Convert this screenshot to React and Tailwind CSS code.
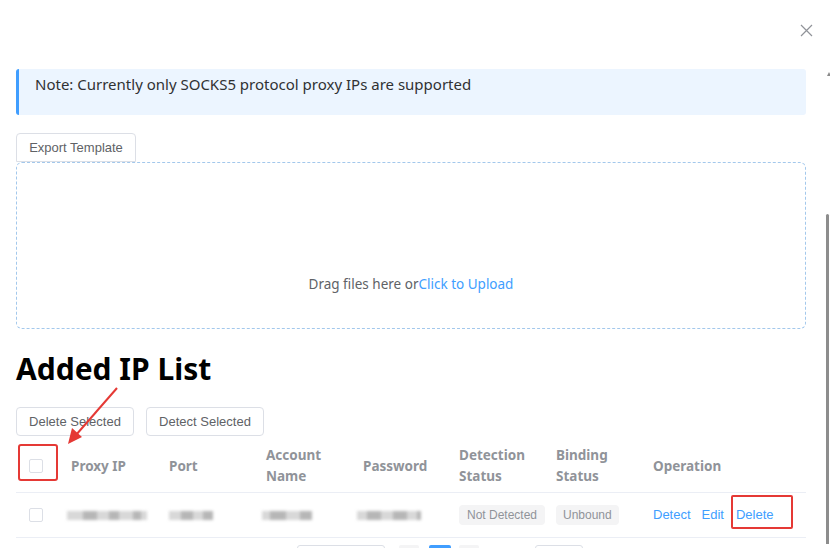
import React from 'react';

// Added IP dialog body
const cols = [
  { key: 'ip', label: 'Proxy IP', w: 'w-[98px]' },
  { key: 'port', label: 'Port', w: 'w-[97px]' },
  { key: 'account', label: 'Account Name', w: 'w-[97px]' },
  { key: 'password', label: 'Password', w: 'w-[96px]' },
  { key: 'detect', label: 'Detection Status', w: 'w-[97px]' },
  { key: 'bind', label: 'Binding Status', w: 'w-[97px]' },
  { key: 'op', label: 'Operation', w: 'flex-1' },
];

function Blur({ widths, className = '' }) {
  return (
    <div className={`flex items-center h-[12px] blur-[1.5px] ${className}`}>
      {widths.map((w, i) => (
        <div key={i} className="h-[9px] bg-[#a9a9a9]" style={{ width: w, opacity: i % 2 ? 0.85 : 0.45 }} />
      ))}
    </div>
  );
}

function Checkbox() {
  return <span className="block w-[14px] h-[14px] border border-[#dcdfe6] rounded-[2px] bg-white" />;
}

function Btn({ children, className = '' }) {
  return (
    <button className={`block h-[29px] whitespace-nowrap border border-[#dcdfe6] rounded-[4px] bg-white text-[13px] text-[#606266] ${className}`} style={{ fontFamily: '"Liberation Sans", Arial, sans-serif' }}>
      {children}
    </button>
  );
}

export default function App() {
  return (
    <div className="relative w-[830px] h-[548px] overflow-hidden bg-white" style={{ fontFamily: '"Noto Sans", "Open Sans", sans-serif' }}>
      <div className="pl-[16px] w-[806px]">
        {/* header */}
        <div className="h-[69px] flex justify-end items-start pt-[24px] -mr-[7px]">
          <svg width="13" height="13" viewBox="0 0 13 13" className="text-[#909399]">
            <path d="M1 1L12 12M12 1L1 12" stroke="currentColor" strokeWidth="1.2" />
          </svg>
        </div>

        {/* note */}
        <div className="h-[46px] bg-[#ecf5ff] border-l-[3px] border-[#409eff] rounded-[3px] pl-[16px] pt-[4px] text-[15px] text-[#303133]">
          Note: Currently only SOCKS5 protocol proxy IPs are supported
        </div>

        <Btn className="mt-[18px] w-[120px] rounded-b-none">Export Template</Btn>

        {/* upload */}
        <div className="h-[167px] border border-dashed border-[#a3c8ec] rounded-[6px] flex items-end justify-center pb-[34px] text-[13.5px]">
          <span className="text-[#606266]">Drag files here or</span>
          <span className="text-[#409eff]">Click to Upload</span>
        </div>

        <h2 className="mt-[22px] h-[36px] text-[30px] leading-[36px] font-bold text-black">Added IP List</h2>

        <div className="mt-[20px] flex gap-[12px]">
          <Btn className="w-[118px]">Delete Selected</Btn>
          <Btn className="w-[118px]">Detect Selected</Btn>
        </div>

        {/* table */}
        <div className="mt-[4px]">
          <div className="flex items-center h-[53px] border-b border-[#ebeef5] text-[13.5px] font-bold text-[#909399] leading-[21px]">
            <div className="relative w-[55px] h-full flex items-center pl-[13px]">
              <Checkbox />
              <div className="absolute left-[2px] top-[4px] w-[40px] h-[37px] border-2 border-[#e53935] rounded-[3px]" />
            </div>
            {cols.map((c) => (
              <div key={c.key} className={`${c.w} pr-[10px]`}>{c.label}</div>
            ))}
          </div>

          <div className="flex items-center h-[45px] border-b border-[#ebeef5] text-[13px]">
            <div className="w-[55px] pl-[13px]"><Checkbox /></div>
            <div className="w-[98px]"><Blur className="-ml-[4px]" widths={[16, 14, 12, 10, 14, 8, 6]} /></div>
            <div className="w-[97px]"><Blur widths={[12, 12, 10, 10]} /></div>
            <div className="w-[97px]"><Blur className="-ml-[4px]" widths={[8, 16, 14, 12]} /></div>
            <div className="w-[96px]"><Blur className="-ml-[6px]" widths={[10, 14, 12, 14, 10, 4]} /></div>
            <div className="w-[97px]">
              <span className="inline-block h-[20px] leading-[20px] px-[8px] rounded-[4px] bg-[#f4f4f5] text-[12px] text-[#909399]" style={{ fontFamily: '"Liberation Sans", Arial, sans-serif' }}>Not Detected</span>
            </div>
            <div className="w-[97px]">
              <span className="inline-block h-[20px] leading-[20px] px-[7px] rounded-[4px] bg-[#f4f4f5] text-[12px] text-[#909399]" style={{ fontFamily: '"Liberation Sans", Arial, sans-serif' }}>Unbound</span>
            </div>
            <div className="flex-1 flex items-center gap-[12px] text-[#409eff]" style={{ fontFamily: '"Liberation Sans", Arial, sans-serif' }}>
              <span>Detect</span>
              <span className="-ml-[1px]">Edit</span>
              <span className="relative">
                Delete
                <span className="absolute -left-[5px] -top-[10px] w-[62px] h-[34px] border-2 border-[#e53935] rounded-[2px]" />
              </span>
            </div>
          </div>

          {/* pagination (cut off) */}
          <div className="mt-[7px] flex items-start h-[20px] pl-[281px] gap-[14px]">
            <div className="w-[88px] h-[20px] border border-[#dcdfe6] rounded-[3px]" />
            <div className="w-[20px] h-[20px] bg-[#f4f4f5] rounded-[2px]" />
            <div className="w-[22px] h-[20px] bg-[#409eff] rounded-[2px] -ml-[4px]" />
            <div className="w-[20px] h-[20px] bg-[#f4f4f5] rounded-[2px] -ml-[6px]" />
            <div className="w-[48px] h-[20px] border border-[#dcdfe6] rounded-[3px] ml-[42px]" />
          </div>
        </div>
      </div>

      {/* scrollbar */}
      <div className="absolute right-0 top-[72px] w-[4px] h-[476px]">
        <div className="w-0 h-0 ml-[1px] border-x-[2px] border-x-transparent border-b-[4px] border-b-[#8a8a8a]" />
        <div className="mt-[138px] w-[3px] h-[330px] bg-[#8d8d8d] rounded-t-[2px]" />
      </div>

      {/* annotation arrow */}
      <svg className="absolute left-0 top-0 pointer-events-none" width="830" height="548">
        <line x1="117" y1="388" x2="76" y2="435" stroke="#e53935" strokeWidth="2" />
        <path d="M68 444 L72 428 L82 437 Z" fill="#e53935" />
      </svg>
    </div>
  );
}
